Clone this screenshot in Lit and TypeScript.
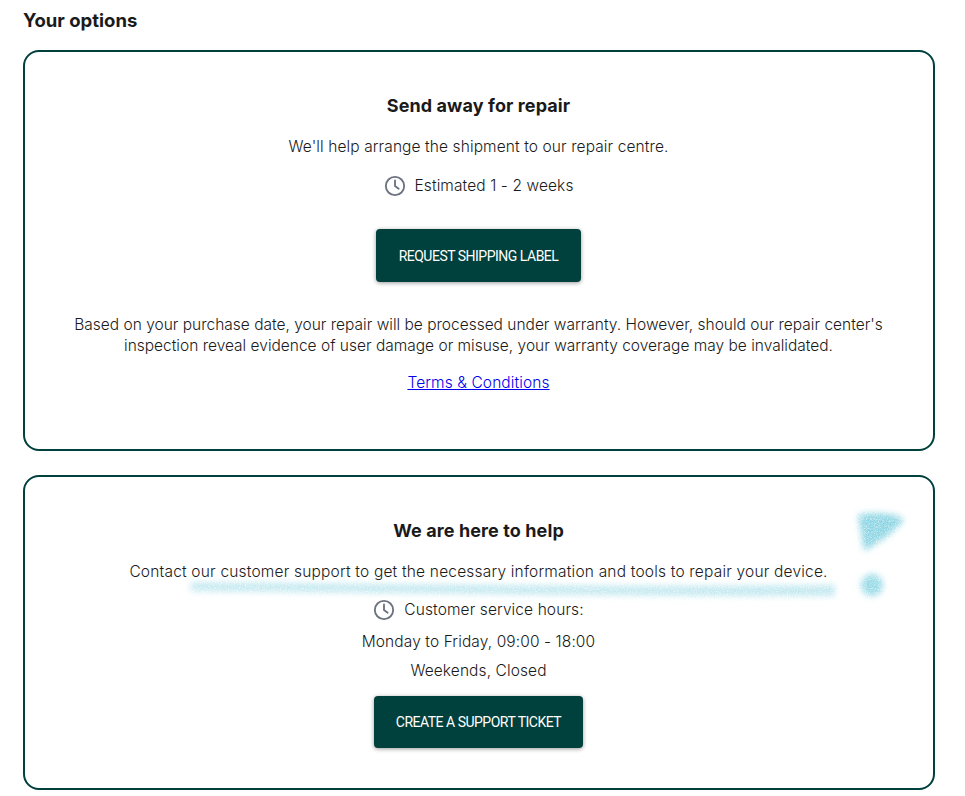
import { LitElement, css, html } from "lit";
import { customElement } from "lit/decorators.js";

const clock = html`<svg class="clock" viewBox="0 0 24 24" fill="none" stroke="#6b7280" stroke-width="2" stroke-linecap="round" stroke-linejoin="round">
  <circle cx="12" cy="12" r="10"></circle>
  <path d="M12 6v6l4 3"></path>
</svg>`;

@customElement("app-root")
export class AppRoot extends LitElement {
  static styles = css`
    :host {
      display: block;
      background: #fff;
      color: #1a1a1a;
      font-family: "Inter", "Liberation Sans", sans-serif;
      font-size: 15.5px;
      font-weight: 300;
      line-height: 24px;
      letter-spacing: 0.1px;
    }
    .page {
      padding: 8px 30px 0 23px;
    }
    h2 {
      margin: 0 0 18px;
      font-size: 18.5px;
      font-weight: 700;
      line-height: 24px;
      letter-spacing: 0;
    }
    .card {
      position: relative;
      box-sizing: border-box;
      margin-bottom: 24px;
      padding: 42px 41px 0 40px;
      border: 2px solid #00413d;
      border-radius: 16px;
      text-align: center;
    }
    .repair {
      height: 401px;
    }
    .help {
      height: 315px;
    }
    h3 {
      margin: 0 0 17px;
      font-size: 18px;
      font-weight: 700;
      line-height: 24px;
      letter-spacing: 0.1px;
    }
    p {
      margin: 0;
    }
    .row {
      display: flex;
      justify-content: center;
      align-items: center;
      gap: 9px;
      margin-top: 15px;
    }
    .help .row {
      margin-top: 14px;
    }
    .clock {
      width: 22px;
      height: 22px;
    }
    .btn {
      display: block;
      margin: 31px auto 32px;
      width: 205px;
      height: 53px;
      border: 0;
      border-radius: 4px;
      padding: 0;
      background: #00413d;
      color: #fff;
      font-family: "Roboto", sans-serif;
      font-size: 14px;
      font-weight: 400;
      letter-spacing: -0.5px;
      box-shadow: 0 1px 4px rgba(0, 0, 0, 0.4);
    }
    .help .btn {
      margin: 13px auto 0;
      width: 209px;
      height: 52px;
    }
    .note {
      line-height: 21px;
      letter-spacing: 0;
    }
    .contact {
      letter-spacing: 0.19px;
    }
    .terms {
      margin-top: 15px;
    }
    a {
      color: #00e;
    }
    .hours {
      margin-top: 8px;
    }
    .closed {
      margin-top: 5px;
    }
    .scribble {
      position: absolute;
      left: -2px;
      top: -2px;
      width: 912px;
      height: 315px;
      pointer-events: none;
    }
  `;

  render() {
    return html`<div class="page">
      <h2>Your options</h2>

      <section class="card repair">
        <h3>Send away for repair</h3>
        <p>We'll help arrange the shipment to our repair centre.</p>
        <div class="row">${clock}<span>Estimated 1 - 2 weeks</span></div>
        <button class="btn">REQUEST SHIPPING LABEL</button>
        <p class="note">
          Based on your purchase date, your repair will be processed under warranty. However, should our repair center's
          inspection reveal evidence of user damage or misuse, your warranty coverage may be invalidated.
        </p>
        <p class="terms"><a href="#">Terms &amp; Conditions</a></p>
      </section>

      <section class="card help">
        <h3>We are here to help</h3>
        <p class="contact">Contact our customer support to get the necessary information and tools to repair your device.</p>
        <div class="row">${clock}<span>Customer service hours:</span></div>
        <p class="hours">Monday to Friday, 09:00 - 18:00</p>
        <p class="closed">Weekends, Closed</p>
        <button class="btn">CREATE A SUPPORT TICKET</button>
        <!-- highlighter marks drawn over the card -->
        <svg class="scribble" viewBox="0 0 912 315">
          <defs>
            <filter id="chalk" x="-10%" y="-100%" width="120%" height="300%">
              <feGaussianBlur in="SourceGraphic" stdDeviation="3.2" result="soft"></feGaussianBlur>
              <feTurbulence type="fractalNoise" baseFrequency="0.9" numOctaves="2" seed="4" result="grain"></feTurbulence>
              <feDisplacementMap in="soft" in2="grain" scale="3" xChannelSelector="R" yChannelSelector="G" result="rough"></feDisplacementMap>
              <feColorMatrix in="grain" type="matrix" values="0 0 0 0 0  0 0 0 0 0  0 0 0 0 0  0 0 0 1.6 0.1" result="specks"></feColorMatrix>
              <feComposite in="rough" in2="specks" operator="in"></feComposite>
              <feGaussianBlur stdDeviation="0.5"></feGaussianBlur>
            </filter>
          </defs>
          <g filter="url(#chalk)">
            <path fill="#bfe7ef" d="M168 107 C 350 109 600 112 812 110 L 812 121 C 600 121 350 118 168 116 Z"></path>
            <path fill="#90d6e4" d="M835 40 C 850 36 872 38 881 44 C 874 56 852 70 841 76 Z"></path>
            <circle fill="#9adbe7" cx="849" cy="110" r="11"></circle>
          </g>
        </svg>
      </section>
    </div>`;
  }
}
